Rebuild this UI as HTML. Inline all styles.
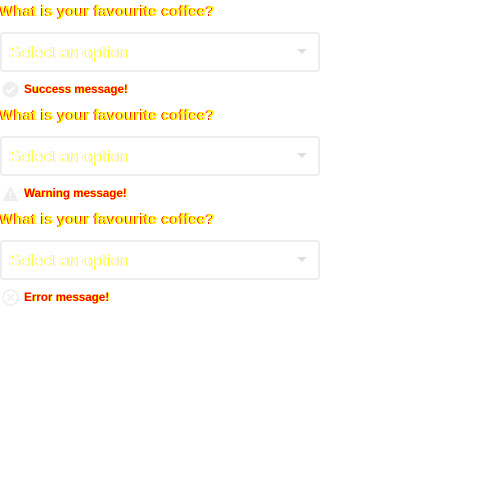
<!DOCTYPE html>
<html><head><style>
body{margin:0;background:#fff;font-family:"Liberation Sans",sans-serif;}
.s{position:absolute;left:0;width:320px;height:104px}
.l{position:absolute;left:0;top:3px;font-size:15px;font-weight:bold;color:#ff0;text-shadow:-1px 0 #f00;white-space:nowrap}
.b{position:absolute;left:0;top:32px;width:316px;height:36px;border:2px solid #eee;border-radius:3px}
.p{position:absolute;left:7px;top:10px;font-size:16.5px;color:#fff;text-shadow:1px 0 #ff0,-1px 0 #eee;white-space:nowrap}
.a{position:absolute;left:295px;top:15px;width:0;height:0;border-left:5px solid transparent;border-right:5px solid transparent;border-top:5px solid #ddd}
.i{position:absolute;left:2px;top:81px;width:17px;height:17px}
.m{position:absolute;left:24px;top:83px;font-size:11.6px;font-weight:bold;color:#f00;text-shadow:1px 0 #ff0;white-space:nowrap}
</style></head><body>
<div class="s" style="top:0">
<div class="l">What is your favourite coffee?</div>
<div class="b"><div class="p">Select an option</div><div class="a"></div></div>
<svg class="i" viewBox="0 0 17 17"><circle cx="8.5" cy="8.5" r="8" fill="#eee"/><path d="M4.5 8.8l2.6 2.6 5.4-5.4" stroke="#fff" stroke-width="2" fill="none"/></svg>
<div class="m">Success message!</div>
</div>
<div class="s" style="top:104px">
<div class="l">What is your favourite coffee?</div>
<div class="b"><div class="p">Select an option</div><div class="a"></div></div>
<svg class="i" viewBox="0 0 17 17"><path d="M8.5 1L16.5 16H0.5Z" fill="#eee"/><path d="M8.5 6v5M8.5 12.5v1.5" stroke="#fff" stroke-width="1.6"/></svg>
<div class="m">Warning message!</div>
</div>
<div class="s" style="top:208px">
<div class="l">What is your favourite coffee?</div>
<div class="b"><div class="p">Select an option</div><div class="a"></div></div>
<svg class="i" viewBox="0 0 17 17"><circle cx="8.5" cy="8.5" r="7.5" fill="none" stroke="#eee" stroke-width="1.5"/><path d="M5.5 5.5l6 6M11.5 5.5l-6 6" stroke="#eee" stroke-width="1.5"/></svg>
<div class="m">Error message!</div>
</div>
</body></html>
